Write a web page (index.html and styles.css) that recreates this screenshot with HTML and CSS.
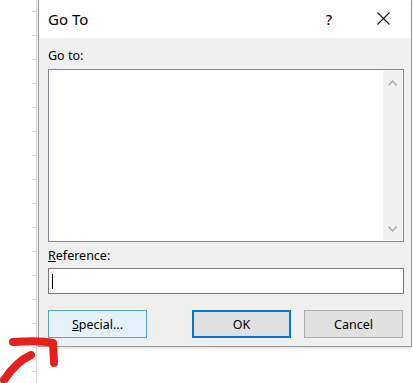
FILE: index.html
```html
<!DOCTYPE html>
<html lang="en">
<head>
  <meta charset="UTF-8">
  <meta name="viewport" content="width=device-width, initial-scale=1.0">
  <title>Go To</title>
  <link rel="stylesheet" href="styles.css">
</head>
<body>
  <div class="sheet"></div>

  <div class="dialog">
    <div class="titlebar">
      <span class="title">Go To</span>
      <span class="help">?</span>
      <span class="close">
        <svg width="13" height="13" viewBox="0 0 13 13">
          <path d="M0.5 0.5 L12.5 12.5 M12.5 0.5 L0.5 12.5" stroke="#1a1a1a" stroke-width="1.1" fill="none"/>
        </svg>
      </span>
    </div>

    <div class="content">
      <div class="label">Go to:</div>
      <div class="listbox">
        <div class="list"></div>
        <div class="scrollbar">
          <svg width="9" height="6" viewBox="0 0 9 6">
            <path d="M0.5 5.5 L4.5 1 L8.5 5.5" stroke="#a6a6a6" stroke-width="1.2" fill="none"/>
          </svg>
          <svg width="9" height="6" viewBox="0 0 9 6">
            <path d="M0.5 0.5 L4.5 5 L8.5 0.5" stroke="#a6a6a6" stroke-width="1.2" fill="none"/>
          </svg>
        </div>
      </div>

      <div class="label label-ref"><u>R</u>eference:</div>
      <div class="input"><span class="caret"></span></div>

      <!-- dialog buttons -->
      <div class="buttons">
        <div class="btn btn-hover"><span><u>S</u>pecial...</span></div>
        <div class="btn btn-default">OK</div>
        <div class="btn">Cancel</div>
      </div>
    </div>
  </div>

  <svg class="scribble" width="70" height="50" viewBox="0 335 70 50">
    <path d="M13 342 C 28 341, 44 341, 53 343 L 54 363" stroke="#e3201b" stroke-width="8" fill="none" stroke-linecap="round" stroke-linejoin="round"/>
    <path d="M4 380 C 12 368, 20 360, 31 355" stroke="#e3201b" stroke-width="8" fill="none" stroke-linecap="round"/>
  </svg>
</body>
</html>
```

FILE: styles.css
```css
body {
  margin: 0;
  width: 413px;
  height: 383px;
  overflow: hidden;
  background: #fff;
  display: flex;
  align-items: flex-start;
  font-family: "Noto Sans", "Open Sans", sans-serif;
  color: #000;
  position: relative;
}

/* bit of the worksheet behind the dialog */
.sheet {
  width: 36px;
  height: 383px;
  flex: none;
  border-right: 1px solid #d4d4d4;
  background: repeating-linear-gradient(to bottom, transparent 0, transparent 11px, #d4d4d4 11px, #d4d4d4 12px, transparent 12px, transparent 24px) right top / 4px 100% no-repeat;
}

.dialog {
  width: 372px;
  height: 346px;
  margin-left: 1px;
  border: 1px solid #9a9a9a;
  border-top: none;
  background: #f0f0f0;
  box-shadow: 0 1px 2px rgba(0, 0, 0, 0.15);
  display: flex;
  flex-direction: column;
}

.titlebar {
  height: 38px;
  background: #fff;
  display: flex;
  align-items: center;
}

.title {
  font-size: 15px;
  margin-left: 9px;
  flex: 1;
  padding-bottom: 1px;
}

.help {
  font-size: 15px;
  width: 20px;
  text-align: center;
  margin-right: 38px;
}

.close {
  display: flex;
  margin-right: 21px;
  padding-bottom: 1px;
}

.content {
  padding: 9px 7px 0 9px;
  display: flex;
  flex-direction: column;
}

.label {
  font-size: 12.5px;
  line-height: 18px;
  height: 18px;
  margin-bottom: 4px;
}

.label-ref {
  margin-top: 5px;
  margin-bottom: 3px;
}

.listbox {
  height: 171px;
  border: 1px solid #828790;
  background: #fff;
  display: flex;
}

.list {
  flex: 1;
}

.scrollbar {
  width: 19px;
  margin: 1px 1px 1px 0;
  background: #f0f0f0;
  display: flex;
  flex-direction: column;
  justify-content: space-between;
  align-items: center;
  padding: 9px 0 8px;
}

.input {
  height: 24px;
  border: 1px solid #7a7a7a;
  background: #fff;
  display: flex;
  align-items: center;
}

.caret {
  width: 1px;
  height: 15px;
  margin-left: 3px;
  background: #000;
}

.buttons {
  display: flex;
  gap: 13px;
  margin-top: 16px;
}

.btn {
  width: 97px;
  height: 26px;
  border: 1px solid #adadad;
  background: #e1e1e1;
  font-size: 12.5px;
  display: flex;
  align-items: center;
  justify-content: center;
}

.btn-hover {
  border-color: #5aa1d8;
  background: #e5f1fb;
  margin-right: 32px;
}

.btn-default {
  width: 95px;
  height: 24px;
  border: 2px solid #0078d7;
}

.scribble {
  position: absolute;
  left: 0;
  top: 335px;
}
```
